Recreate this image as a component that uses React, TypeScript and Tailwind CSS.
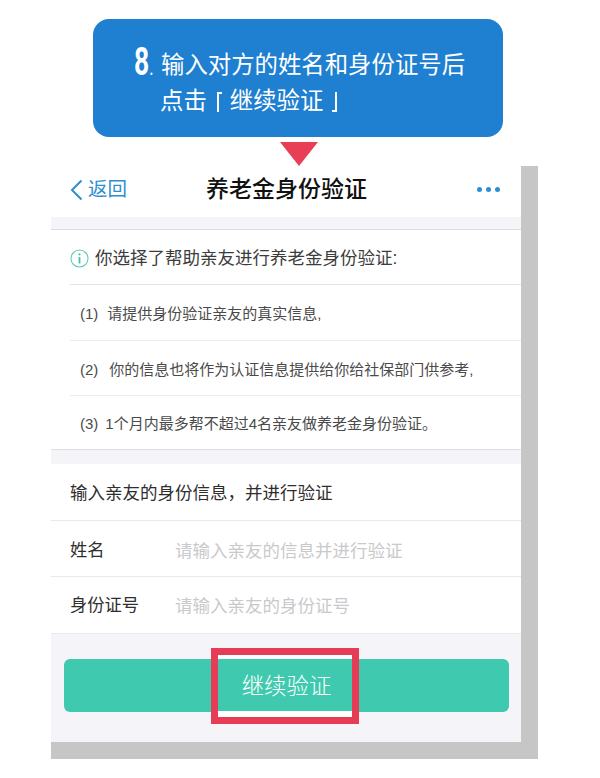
const cjk = "font-['Liberation_Sans','Noto_Sans_CJK_SC',sans-serif]";

function ListRow({ n, text, gap, height, last }: { n: string; text: string; gap: string; height: string; last?: boolean }) {
  return (
    <div className={`${height} flex items-center pt-[4px] text-[15px] text-[#4a4a4a] ${last ? '' : 'border-b border-[#ececec]'}`}>
      <span className="ml-[10px]">({n})</span>
      <span className={gap}>{text}</span>
    </div>
  );
}

function FormRow({ label, placeholder, height, pad }: { label: string; placeholder: string; height: string; pad: string }) {
  return (
    <div className={`${height} ${pad} flex items-center border-b border-[#e9e9ed] pl-[19px] text-[17.3px]`}>
      <span className="w-[105px] text-[#2e2e2e]">{label}</span>
      <span className="mt-[1px] text-[#c9c9cc] text-[17.5px]">{placeholder}</span>
    </div>
  );
}

export default function App() {
  return (
    <div className={`relative w-[600px] h-[778px] bg-white overflow-hidden pt-[19px] ${cjk}`}>
      <div className="ml-[93px] w-[410px] h-[118px] rounded-[16px] bg-[#1f7fd0] text-white pt-[29px] pl-[41px]">
        <div className="flex items-center h-[36px]">
          <span className="w-[27px] mb-[8px] text-[39px] leading-none font-bold origin-left scale-x-[.68] font-['Roboto',sans-serif]">8<span className="text-[24px] font-normal">.</span></span>
          <span className="text-[23.4px] whitespace-nowrap">输入对方的姓名和身份证号后</span>
        </div>
        <div className="h-[36px] flex items-center pl-[26px] text-[23.4px] whitespace-nowrap">
          点击
          <span className="ml-[10px] w-[5px] h-[20px] border-l-2 border-t-2 border-white"></span>
          <span className="ml-[8px]">继续验证</span>
          <span className="ml-[9px] w-[5px] h-[20px] border-r-2 border-b-2 border-white"></span>
        </div>
      </div>

      <div className="ml-[280px] mt-[5px] w-0 h-0 border-l-[19px] border-r-[19px] border-t-[24px] border-l-transparent border-r-transparent border-t-[#e83f57]"></div>

      <div className="ml-[51px] w-[487px] h-[593px] bg-[#c6c6c6] pr-[17px] pb-[17px]">
        <div className="relative h-[576px] bg-[#f5f5f9] flex flex-col">
          <div className="h-[51px] bg-white flex items-center justify-between pl-[19px] pr-[21px] pb-[4px] relative">
            <div className="flex items-center text-[#2e8ecf] text-[19.5px]">
              <svg width="13" height="22" viewBox="0 0 13 22" fill="none" className="mr-[5px]">
                <path d="M11.5 1.5 L2 11 L11.5 20.5" stroke="#2e8ecf" strokeWidth="2" />
              </svg>
              返回
            </div>
            <div className="absolute left-[155px] top-[7px] text-[23px] leading-[32px] font-medium text-[#111]">养老金身份验证</div>
            <div className="flex gap-[4px]">
              <span className="w-[5px] h-[5px] rounded-full bg-[#2e8ecf]"></span>
              <span className="w-[5px] h-[5px] rounded-full bg-[#2e8ecf]"></span>
              <span className="w-[5px] h-[5px] rounded-full bg-[#2e8ecf]"></span>
            </div>
          </div>

          <div className="mt-[12px] bg-white border-t border-b border-[#dedee0] pl-[19px]">
            <div className="h-[55px] flex items-center pt-[3px] border-b border-[#e2e2e2] text-[17.5px] text-[#3c3c3c]">
              <svg width="19" height="19" viewBox="0 0 19 19" fill="none" className="mr-[6px]">
                <circle cx="9.5" cy="9.5" r="8.5" stroke="#5fcdb6" strokeWidth="1.1" />
                <circle cx="9.5" cy="5.3" r="1.1" fill="#3fc4a9" />
                <path d="M9.5 8 V14.5" stroke="#3fc4a9" strokeWidth="1.8" />
              </svg>
              你选择了帮助亲友进行养老金身份验证:
            </div>
            <ListRow n="1" text="请提供身份验证亲友的真实信息," gap="ml-[9px]" height="h-[56px]" />
            <ListRow n="2" text="你的信息也将作为认证信息提供给你给社保部门供参考," gap="ml-[11px]" height="h-[55px]" />
            <ListRow n="3" text="1个月内最多帮不超过4名亲友做养老金身份验证。" gap="ml-[7px]" height="h-[53px]" last />
          </div>

          <div className="mt-[14px] bg-white">
            <div className="h-[57px] flex items-center pt-[2px] border-b border-[#e9e9ed] pl-[19px] text-[17.5px] text-[#2e2e2e]">
              {"输入亲友的身份信息\uFF0C并进行验证"}
            </div>
            <FormRow label="姓名" placeholder="请输入亲友的信息并进行验证" height="h-[56px]" pad="pt-[4px]" />
            <FormRow label="身份证号" placeholder="请输入亲友的身份证号" height="h-[57px]" pad="pt-[2px]" />
          </div>

          <div className="mt-[25px] ml-[13px] mr-[12px] h-[53px] rounded-[6px] bg-[#3fc9af] flex items-center justify-center pt-[3px] text-white text-[22.4px] font-light">
            继续验证
          </div>

          <div className="absolute left-[160px] top-[482px] w-[148px] h-[76px] border-[7px] border-[#e63c55] shadow-[inset_0_3px_0_#fff,inset_0_-6px_0_#fff]"></div>
        </div>
      </div>
    </div>
  );
}
